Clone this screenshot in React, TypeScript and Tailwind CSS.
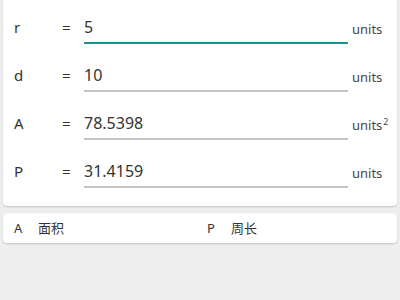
const rows = [
  { label: "r", value: "5", unit: "units", sup: "", active: true },
  { label: "d", value: "10", unit: "units", sup: "", active: false },
  { label: "A", value: "78.5398", unit: "units", sup: "2", active: false },
  { label: "P", value: "31.4159", unit: "units", sup: "", active: false },
];

export default function App() {
  return (
    <div
      className="h-[300px] w-[400px] overflow-hidden bg-[#eeeeee] text-[#333333]"
      style={{ fontFamily: '"Noto Sans", "Noto Sans CJK SC", sans-serif' }}
    >
      {/* Values card */}
      <div className="mx-[3px] rounded-b-sm bg-white pt-[3px] pb-[11px] pl-[11px] shadow-[0_1px_2px_rgba(0,0,0,0.18)]">
        {rows.map((row) => (
          <div key={row.label} className="flex h-[48px] items-center">
            <div className="w-[48px] text-[15px] leading-none">{row.label}</div>
            <div className="w-[22px] text-[15px] leading-none">=</div>
            <div
              className={
                row.active
                  ? "flex h-[34px] w-[264px] items-center border-b-2 border-[#16958a] pt-[2px] text-[16px] leading-none"
                  : "flex h-[34px] w-[264px] items-center border-b-2 border-[#c4c4c4] pt-[2px] text-[16px] leading-none"
              }
            >
              {row.value}
            </div>
            <div className="ml-[4px] pt-[4px] text-[13px] leading-none text-[#444444]">
              {row.unit}
              {row.sup && <sup className="ml-[1px] text-[9px]">{row.sup}</sup>}
            </div>
          </div>
        ))}
      </div>

      {/* Legend card */}
      <div className="mx-[3px] mt-[7px] flex h-[30px] items-center rounded-sm bg-white pl-[11px] text-[13px] leading-none shadow-[0_1px_2px_rgba(0,0,0,0.18)]">
        <div className="flex w-[193px] items-center">
          <span className="w-[24px]">A</span>
          <span>面积</span>
        </div>
        <div className="flex items-center">
          <span className="w-[24px]">P</span>
          <span>周长</span>
        </div>
      </div>
    </div>
  );
}
